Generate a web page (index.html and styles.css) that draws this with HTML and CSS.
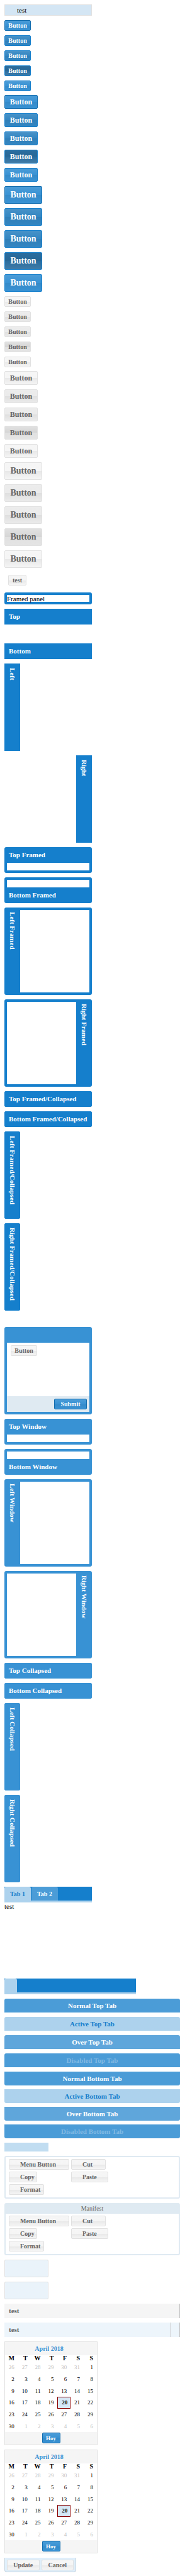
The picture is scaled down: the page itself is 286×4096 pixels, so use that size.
FILE: index.html
```html
<!DOCTYPE html>
<html lang="en">
<head>
<meta charset="utf-8">
<title>Theme components</title>
<meta name="viewport" content="width=device-width, initial-scale=1">
<link rel="stylesheet" href="styles.css">
</head>
<body>
<main class="page">
  <div class="progress">test</div>

  <section class="stack stack--small">
    <button class="btn btn--primary btn--default">Button</button>
    <button class="btn btn--primary is-over">Button</button>
    <button class="btn btn--primary is-over">Button</button>
    <button class="btn btn--primary is-pressed">Button</button>
    <button class="btn btn--primary">Button</button>
  </section>
  <section class="stack">
    <button class="btn btn--medium btn--primary btn--default">Button</button>
    <button class="btn btn--medium btn--primary is-over">Button</button>
    <button class="btn btn--medium btn--primary is-over">Button</button>
    <button class="btn btn--medium btn--primary is-pressed">Button</button>
    <button class="btn btn--medium btn--primary">Button</button>
  </section>
  <section class="stack">
    <button class="btn btn--large btn--primary btn--default">Button</button>
    <button class="btn btn--large btn--primary is-over">Button</button>
    <button class="btn btn--large btn--primary is-over">Button</button>
    <button class="btn btn--large btn--primary is-pressed">Button</button>
    <button class="btn btn--large btn--primary">Button</button>
  </section>

  <section class="stack stack--small">
    <button class="btn">Button</button>
    <button class="btn is-over">Button</button>
    <button class="btn is-over">Button</button>
    <button class="btn is-pressed">Button</button>
    <button class="btn">Button</button>
  </section>
  <section class="stack">
    <button class="btn btn--medium">Button</button>
    <button class="btn btn--medium is-over">Button</button>
    <button class="btn btn--medium is-over">Button</button>
    <button class="btn btn--medium is-pressed">Button</button>
    <button class="btn btn--medium">Button</button>
  </section>
  <section class="stack">
    <button class="btn btn--large">Button</button>
    <button class="btn btn--large is-over">Button</button>
    <button class="btn btn--large is-over">Button</button>
    <button class="btn btn--large is-pressed">Button</button>
    <button class="btn btn--large">Button</button>
  </section>

  <section class="stack">
    <div class="toolbar"><button class="btn btn--fit">test</button></div>
    <div class="panel panel--framed panel--plain"><div class="panel-body">Framed panel</div></div>

    <div class="panel"><h2 class="title">Top</h2><div class="panel-body panel-body--open"></div></div>
    <div class="panel"><h2 class="title">Bottom</h2></div>
    <div class="panel panel--side"><h2 class="title">Left</h2></div>
    <div class="panel panel--side panel--right"><h2 class="title">Right</h2></div>

    <div class="panel panel--framed panel--top"><h2 class="title">Top Framed</h2><div class="panel-body"></div></div>
    <div class="panel panel--framed panel--bottom"><div class="panel-body"></div><h2 class="title">Bottom Framed</h2></div>
    <div class="panel panel--framed panel--side panel--left"><h2 class="title">Left Framed</h2><div class="panel-body"></div></div>
    <div class="panel panel--framed panel--side panel--right"><div class="panel-body"></div><h2 class="title">Right Framed</h2></div>

    <div class="panel panel--framed"><h2 class="title">Top Framed/Collapsed</h2></div>
    <div class="panel panel--framed"><h2 class="title">Bottom Framed/Collapsed</h2></div>
    <div class="panel panel--framed panel--side panel--collapsed"><h2 class="title">Left Framed/Collapsed</h2></div>
    <div class="panel panel--framed panel--side panel--collapsed"><h2 class="title">Right Framed/Collapsed</h2></div>
    <div class="blank-line"></div>

    <div class="panel panel--framed panel--window panel--top panel--tall">
      <h2 class="title"></h2>
      <div class="panel-body panel-body--padded"><button class="btn">Button</button></div>
      <div class="panel-footer"><button class="btn btn--wide btn--primary btn--default">Submit</button></div>
    </div>
    <div class="panel panel--framed panel--window panel--top"><h2 class="title">Top Window</h2><div class="panel-body"></div></div>
    <div class="panel panel--framed panel--window panel--bottom"><div class="panel-body"></div><h2 class="title">Bottom Window</h2></div>
    <div class="panel panel--framed panel--window panel--side panel--left"><h2 class="title">Left Window</h2><div class="panel-body"></div></div>
    <div class="panel panel--framed panel--window panel--side panel--right"><div class="panel-body"></div><h2 class="title">Right Window</h2></div>
    <div class="panel panel--framed panel--window"><h2 class="title">Top Collapsed</h2></div>
    <div class="panel panel--framed panel--window"><h2 class="title">Bottom Collapsed</h2></div>
    <div class="panel panel--framed panel--window panel--side panel--collapsed"><h2 class="title">Left Collapsed</h2></div>
    <div class="panel panel--framed panel--window panel--side panel--collapsed"><h2 class="title">Right Collapsed</h2></div>

    <div class="tab-panel">
      <div class="tab-bar">
        <button class="tab is-active">Tab 1</button>
        <button class="tab">Tab 2</button>
      </div>
      <div class="tab-content">test</div>
    </div>
    <div class="tab-bar tab-bar--wide"><button class="tab tab--blank is-active" aria-label="Blank tab"></button></div>
  </section>

  <section class="stack">
    <button class="tab tab--full">Normal Top Tab</button>
    <button class="tab tab--full is-active">Active Top Tab</button>
    <button class="tab tab--full is-hover">Over Top Tab</button>
    <button class="tab tab--full" disabled>Disabled Top Tab</button>
  </section>
  <section class="stack stack--tabs">
    <button class="tab tab--full tab--down">Normal Bottom Tab</button>
    <button class="tab tab--full tab--down is-active">Active Bottom Tab</button>
    <button class="tab tab--full tab--down is-hover">Over Bottom Tab</button>
    <button class="tab tab--full tab--down" disabled>Disabled Bottom Tab</button>
  </section>

  <section class="stack">
    <div class="swatch"></div>
    <div class="btn-group">
      <div class="btn-grid">
        <button class="btn btn--menu">Menu Button</button><button class="btn btn--menu btn--cut">Cut</button>
        <button class="btn btn--menu btn--copy">Copy</button><button class="btn btn--menu btn--paste">Paste</button>
        <button class="btn btn--menu btn--format">Format</button>
      </div>
    </div>
    <div class="btn-group btn-group--titled">
      <h3 class="group-title">Manifest</h3>
      <div class="btn-grid">
        <button class="btn btn--menu">Menu Button</button><button class="btn btn--menu btn--cut">Cut</button>
        <button class="btn btn--menu btn--copy">Copy</button><button class="btn btn--menu btn--paste">Paste</button>
        <button class="btn btn--menu btn--format">Format</button>
      </div>
    </div>
    <div class="tip"></div>
    <div class="tip"></div>
    <div class="column-header">test</div>
    <div class="column-header column-header--over">test</div>

    <div class="calendar">
      <div class="calendar-head"><button class="month">April 2018</button></div>
      <table class="days">
        <thead><tr><th>M</th><th>T</th><th>W</th><th>T</th><th>F</th><th>S</th><th>S</th></tr></thead>
        <tbody>
          <tr><td class="out">26</td><td class="out">27</td><td class="out">28</td><td class="out">29</td><td class="out">30</td><td class="out">31</td><td>1</td></tr>
          <tr><td>2</td><td>3</td><td>4</td><td>5</td><td>6</td><td>7</td><td>8</td></tr>
          <tr><td>9</td><td>10</td><td>11</td><td>12</td><td>13</td><td>14</td><td>15</td></tr>
          <tr><td>16</td><td>17</td><td>18</td><td>19</td><td class="today">20</td><td>21</td><td>22</td></tr>
          <tr><td>23</td><td>24</td><td>25</td><td>26</td><td>27</td><td>28</td><td>29</td></tr>
          <tr><td>30</td><td class="out">1</td><td class="out">2</td><td class="out">3</td><td class="out">4</td><td class="out">5</td><td class="out">6</td></tr>
        </tbody>
      </table>
      <div class="calendar-foot"><button class="btn btn--today btn--primary btn--default">Hoy</button></div>
    </div>
    <div class="calendar">
      <div class="calendar-head"><button class="month">April 2018</button></div>
      <table class="days">
        <thead><tr><th>M</th><th>T</th><th>W</th><th>T</th><th>F</th><th>S</th><th>S</th></tr></thead>
        <tbody>
          <tr><td class="out">26</td><td class="out">27</td><td class="out">28</td><td class="out">29</td><td class="out">30</td><td class="out">31</td><td>1</td></tr>
          <tr><td>2</td><td>3</td><td>4</td><td>5</td><td>6</td><td>7</td><td>8</td></tr>
          <tr><td>9</td><td>10</td><td>11</td><td>12</td><td>13</td><td>14</td><td>15</td></tr>
          <tr><td>16</td><td>17</td><td>18</td><td>19</td><td class="today">20</td><td>21</td><td>22</td></tr>
          <tr><td>23</td><td>24</td><td>25</td><td>26</td><td>27</td><td>28</td><td>29</td></tr>
          <tr><td>30</td><td class="out">1</td><td class="out">2</td><td class="out">3</td><td class="out">4</td><td class="out">5</td><td class="out">6</td></tr>
        </tbody>
      </table>
      <div class="calendar-foot"><button class="btn btn--today btn--primary btn--default">Hoy</button></div>
    </div>

    <div class="row-editor"><button class="btn">Update</button><button class="btn">Cancel</button></div>
  </section>
</main>
</body>
</html>
```

FILE: styles.css
```css
* { box-sizing: border-box; }

:root {
  --blue: #157fcc;
  --window: #3892d4;
  --pale: #add2ed;
  --line: #e1e1e1;
  --gray: #f5f5f5;
  --text: #666;
  --gap: 7px;
  --box: 139px;
  --bar: 25px;
}

body {
  margin: 0;
  background: #fff;
  color: #000;
  font: 11px/12px "Liberation Serif", serif;
}

button { font-family: inherit; margin: 0; }

.page { padding: 7px 0 6px 7px; }

.stack {
  display: flex;
  flex-direction: column;
  align-items: flex-start;
  gap: var(--gap);
  margin-bottom: var(--gap);
}
.stack:last-child { margin-bottom: 0; }
.stack--small { margin-bottom: 6px; }
.stack--tabs { gap: 6px; }

.progress {
  width: var(--box);
  height: 18px;
  margin-bottom: var(--gap);
  padding-left: 19px;
  border: 1px solid var(--line);
  background: #d4e6f4;
  line-height: 16px;
}

/* Buttons */
.btn {
  width: 42px;
  height: 17px;
  padding: 0;
  border: 1px solid var(--line);
  border-radius: 2px;
  background: linear-gradient(#f6f6f6, #f5f5f5 50%, #e8e8e8 51%, #f5f5f5);
  color: var(--text);
  font-size: 10px;
  font-weight: bold;
  line-height: 14px;
  white-space: nowrap;
}
.btn.is-over { background: linear-gradient(#ececec, #ebebeb 50%, #dfdfdf 51%, #ebebeb); }
.btn.is-pressed { background: linear-gradient(#e1e1e1, #d5d5d5 50%, #e1e1e1 51%, #e4e4e4); }
.btn--primary {
  border-color: var(--blue);
  background: linear-gradient(#4b9cd7, #3892d4 50%, #358ac8 51%, #3892d4);
  color: #fff;
}
.btn--primary.is-over { background: linear-gradient(#4792c8, #3386c2 50%, #307fb8 51%, #3386c2); }
.btn--primary.is-pressed { background: linear-gradient(#2a6d9f, #276796 50%, #2a6d9f 51%, #3f7ba7); }
.btn--default { border-color: #126daf; }
.btn--medium { width: 53px; height: 22px; font-size: 12px; }
.btn--large { width: 60px; height: 28px; font-size: 14px; }
.btn--fit { width: auto; padding: 0 6px; }
.btn--wide { width: 52px; }
.btn--today { width: 29px; font-size: 9px; }
.btn--menu { width: 96px; padding-left: 17px; text-align: left; }
.btn--cut { width: 55px; }
.btn--copy { width: 45px; }
.btn--paste { width: 59px; }
.btn--format { width: 56px; }

.toolbar { display: flex; padding: 4px 6px; }

/* Panels */
.panel {
  --tone: var(--blue);
  display: flex;
  flex-direction: column;
  width: var(--box);
}
.panel--window { --tone: var(--window); }
.panel--framed { border-radius: 3px; background: var(--tone); }
.panel--plain { padding: 4px; }
.panel--plain .panel-body { height: 11px; line-height: 12px; }
.panel--top { padding: 0 4px 4px; }
.panel--bottom { padding: 4px 4px 0; }
.panel--top .title, .panel--bottom .title { padding-left: 3px; }
.panel--side { flex-direction: row; height: var(--box); }
.panel--left { padding: 4px 4px 4px 0; }
.panel--framed.panel--right { padding: 4px 0 4px 4px; }
.panel--right { justify-content: flex-end; }
.panel--collapsed { width: var(--bar); }
.panel--tall { height: var(--box); }

.title {
  height: var(--bar);
  margin: 0;
  padding-left: 7px;
  background: var(--tone);
  color: #fff;
  font-size: 11px;
  line-height: var(--bar);
  white-space: nowrap;
  border-radius: inherit;
}
.panel--side .title {
  width: var(--bar);
  height: auto;
  padding: 7px 0 0;
  writing-mode: vertical-rl;
}
.panel--left .title, .panel--right.panel--framed .title { padding-top: 3px; }

.panel-body { height: 12px; background: #fff; }
.panel-body--open { height: 23px; }
.panel--side .panel-body { flex: 1; height: auto; }
.panel--tall .panel-body { flex: 1; }
.panel-body--padded { padding: 4px 6px; }
.panel-footer {
  display: flex;
  justify-content: flex-end;
  height: 25px;
  padding: 4px;
  background: #dfeaf2;
}
.blank-line { height: 12px; }

/* Tabs */
.tab-panel { width: var(--box); height: var(--box); }
.tab-bar {
  display: flex;
  gap: 1px;
  height: 25px;
  border-bottom: 3px solid var(--pale);
  background: var(--blue);
}
.tab-bar--wide { width: 209px; }
.tab {
  width: 42px;
  height: 22px;
  padding: 0;
  border: 0;
  border-radius: 3px 3px 0 0;
  background: #4b9cd7;
  color: #fff;
  font-size: 10px;
  font-weight: bold;
}
.tab.is-active { background: var(--pale); color: var(--blue); }
.tab.is-hover { background: #5fa6db; }
.tab:disabled { color: #81b9e3; }
.tab--blank { width: 20px; }
.tab--full { width: 100%; font-size: 11px; }
.tab--down { border-radius: 0 0 3px 3px; }
.tab-content { line-height: 13px; }

/* Button groups */
.swatch { width: 70px; height: 14px; background: #c1ddf1; }
.btn-group {
  width: 100%;
  border: 2px solid #dfeaf2;
  border-radius: 3px;
}
.btn-group--titled { border-top: 0; }
.group-title {
  height: 17px;
  margin: 0;
  background: #dfeaf2;
  color: var(--text);
  font-size: 10px;
  font-weight: normal;
  line-height: 18px;
  text-align: center;
}
.btn-grid {
  display: grid;
  grid-template-columns: max-content 1fr;
  gap: 3px;
  padding: 3px 5px 4px;
}

.tip {
  width: 70px;
  height: 28px;
  border: 1px solid var(--line);
  border-radius: 2px;
  background: #eaf3fa;
}

.column-header {
  width: 100%;
  height: 23px;
  padding-left: 7px;
  border-right: 1px solid #c0c0c0;
  background: var(--gray);
  color: var(--text);
  font-weight: bold;
  line-height: 23px;
}
.column-header--over {
  display: flex;
  justify-content: space-between;
  background: #edf5fb;
}
.column-header--over::after {
  content: "";
  width: 13px;
  border-left: 1px solid #c0c0c0;
}

/* Calendar */
.calendar { width: 148px; border: 1px solid var(--line); }
.calendar-head {
  display: flex;
  justify-content: center;
  height: 21px;
  padding-right: 6px;
  background: var(--gray);
}
.month {
  padding: 0;
  border: 0;
  background: none;
  color: var(--window);
  font-size: 10px;
  font-weight: bold;
}
.days {
  width: 100%;
  height: 122px;
  border-collapse: collapse;
  table-layout: fixed;
  font-size: 9px;
  line-height: 10px;
  text-align: right;
}
.days th { padding: 0 6px 0 0; font-size: 10px; }
.days td { padding: 0 6px 0 0; }
.days .out { color: #bfbfbf; }
.days .today {
  padding-right: 5px;
  outline: 1px solid #8b0000;
  outline-offset: -1px;
  background: #d6e8f6;
  font-weight: bold;
}
.calendar-foot {
  display: flex;
  justify-content: center;
  height: 20px;
  padding-top: 1px;
  background: var(--gray);
}

.row-editor {
  display: grid;
  grid-template-columns: 1fr 1fr;
  gap: 3px;
  width: 114px;
  height: 23px;
  padding: 3px 3px 2px;
  border: 1px solid #c5d3de;
  border-top: 0;
  border-radius: 0 0 4px 4px;
  background: #dfeffb;
}
.row-editor .btn { width: auto; }
```
